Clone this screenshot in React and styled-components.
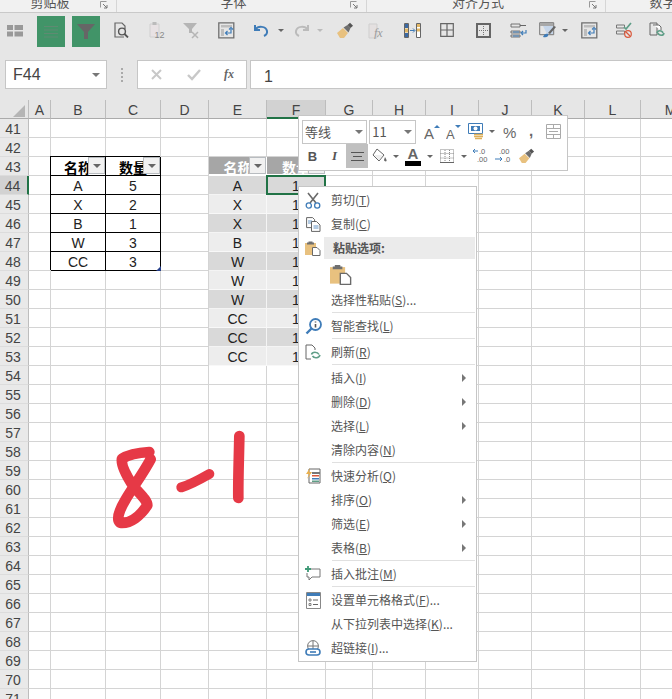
import React from 'react';
import styled, { createGlobalStyle, css } from 'styled-components';

const Global = createGlobalStyle`
  html, body { margin: 0; padding: 0; height: 699px; overflow: hidden; background: #fff; }
  body { font-family: "Noto Sans CJK SC", "Liberation Sans", sans-serif; }
`;
const Page = styled.div`position: relative; width: 672px; height: 699px; overflow: hidden;`;

/* ribbon */
const GroupBar = styled.div`display: flex; height: 12px; background: #f1f1f1; border-bottom: 1px solid #c9c9c9; overflow: hidden;`;
const Group = styled.div`
  position: relative; flex: 0 0 ${p => p.$w}px; height: 12px; box-sizing: border-box; padding-right: 16px;
  border-right: 1px solid #d6d6d6; text-align: center; font-size: 13px; line-height: 12px; color: #555; overflow: hidden;
  & > span { display: block; margin-top: -4px; }
`;
const Launcher = styled.svg`position: absolute; right: 8px; top: 1px;`;
const Toolbar = styled.div`display: flex; align-items: flex-start; height: 47px; padding-top: 3px; box-sizing: border-box; background: #e6e6e6;`;
const Slot = styled.div`
  flex: 0 0 ${p => p.$w}px; height: 31px; display: flex; align-items: center; justify-content: center; box-sizing: border-box;
  ${p => p.$green ? css`background: #419468;` : css`padding-bottom: 3px;`}
  ${p => p.$gap && css`margin-left: ${p.$gap}px;`}
`;

const Formula = styled.div`display: flex; align-items: flex-start; height: 40px; background: #e6e6e6; box-sizing: border-box;`;
const NameBox = styled.div`
  margin-left: 5px; width: 102px; height: 29px; box-sizing: border-box; background: #fff; border: 1px solid #c6c6c6;
  display: flex; align-items: center; justify-content: space-between; padding: 0 6px 0 7px;
  font: 16px "Liberation Sans", sans-serif; color: #444;
`;
const Caret = styled.i`display: block; width: 0; height: 0; border: ${p => p.$s || 4}px solid transparent; border-top-color: ${p => p.$c || '#777'}; border-bottom: 0;`;
const Dots = styled.div`width: 30px; height: 29px; display: flex; align-items: center; justify-content: center; flex-direction: column; gap: 2px;
  & > b { width: 2px; height: 2px; background: #aaa; }`;
const FxBox = styled.div`
  width: 110px; height: 29px; box-sizing: border-box; background: #fff; border: 1px solid #c6c6c6; display: flex; align-items: center;
  justify-content: space-between; padding: 0 12px 0 12px;
`;
const FxText = styled.span`font: italic bold 12px "Liberation Serif", serif; color: #666;`;
const FormulaInput = styled.div`
  flex: 1; margin-left: 3px; height: 29px; box-sizing: border-box; background: #fff; border: 1px solid #c6c6c6; border-right: 0;
  padding: 2px 0 0 13px; font: 16px/27px "Liberation Sans", sans-serif; color: #444;
`;

/* sheet */
const Sheet = styled.div`
  display: grid; grid-template-columns: 29px 22px 55px 55px 48px 58px 59px 47px 53px 53px 53px 53px 56px 60px; grid-auto-rows: 19px;
`;
const ColHead = styled.div`
  box-sizing: border-box; display: flex; align-items: center; justify-content: center; position: relative; padding-top: 1px;
  background: ${p => p.$on ? '#d2d2d2' : '#e6e6e6'}; color: #444; font: 14px "Liberation Sans", sans-serif;
  border-right: 1px solid #bdbdbd; border-bottom: 1px solid ${p => p.$on ? '#217346' : '#ababab'};
  ${p => p.$on && css`box-shadow: inset 0 -1px 0 #217346;`}
`;
const Corner = styled.div`
  box-sizing: border-box; background: #e6e6e6; border-right: 1px solid #bdbdbd; border-bottom: 1px solid #ababab; position: relative;
  &::after { content: ''; position: absolute; right: 3px; bottom: 1px; border-style: solid; border-width: 0 0 12px 12px; border-color: transparent transparent #b5b5b5 transparent; }
`;
const RowHead = styled.div`
  box-sizing: border-box; display: flex; align-items: center; justify-content: center; padding: 2px 2px 0 0;
  background: ${p => p.$on ? '#d2d2d2' : '#e9e9e9'}; color: #444; font: 14px "Liberation Sans", sans-serif;
  border-right: ${p => p.$on ? '2px solid #217346' : '1px solid #bdbdbd'}; border-bottom: 1px solid #dcdcdc;
`;
const kinds = {
  plain: css``,
  box: css`border-color: #000; box-shadow: -1px -1px 0 #000; z-index: 1; color: #222;`,
  boxHead: css`border-color: #000; box-shadow: -1px -1px 0 #000; z-index: 1; color: #000; font-weight: 700; font-family: "Noto Sans CJK SC", sans-serif;`,
  head: css`background: #a6a6a6; border-color: #fff; color: #fff; font-weight: 700; font-family: "Noto Sans CJK SC", sans-serif; border-bottom-width: 2px;`,
  dark: css`background: #d9d9d9; border-color: #f4f4f4; color: #222;`,
  light: css`background: #ededed; border-color: #f8f8f8; color: #222;`,
};
const Cell = styled.div`
  box-sizing: border-box; position: relative; display: flex; align-items: center; justify-content: center; white-space: nowrap; padding-top: 2px;
  border-right: 1px solid #d4d4d4; border-bottom: 1px solid #d4d4d4; font: 14px "Liberation Sans", sans-serif;
  ${p => kinds[p.$kind || 'plain']}
  ${p => p.$sel && css`&::after { content: ''; position: absolute; inset: -1px -1px -1px -1px; border: 2px solid #217346; z-index: 2; }`}
`;
const FilterBtn = styled.span`
  position: absolute; right: 0; top: 0; width: 17px; height: 17px; box-sizing: border-box; background: #f1f1f1; border: 1px solid #b8bcc0;
  display: flex; align-items: center; justify-content: center;
`;
const Handle = styled.span`position: absolute; right: -1px; bottom: -1px; width: 0; height: 0; border-style: solid; border-width: 0 0 5px 5px; border-color: transparent transparent #27408b transparent;`;

/* mini toolbar */
const Mini = styled.div`
  position: absolute; left: 298px; top: 115px; width: 270px; height: 56px; box-sizing: border-box; background: #fff; border: 1px solid #c6c6c6;
  padding: 3px 0 0 3px; z-index: 5; display: flex; flex-direction: column;
`;
const MiniRow = styled.div`display: flex; align-items: center; height: ${p => p.$h}px;`;
const Combo = styled.div`
  width: ${p => p.$w}px; margin-right: 2px; height: 24px; box-sizing: border-box; border: 1px solid #c6c6c6; display: flex; align-items: center; justify-content: space-between;
  padding: 0 3px 0 2px; font-size: 13px; color: #555;
`;
const MiniBtn = styled.div`
  flex: 0 0 ${p => p.$w}px; height: 24px; display: flex; align-items: center; justify-content: center; margin-left: ${p => p.$ml || 0}px;
  ${p => p.$on && css`background: #c0c0c0;`}
`;
const BoldMark = styled.span`font: ${p => p.$i ? 'italic' : 'normal'} bold 13px "Liberation ${p => p.$i ? 'Serif' : 'Sans'}", sans-serif; color: #555;`;

/* context menu */
const Menu = styled.div`
  position: absolute; left: 298px; top: 186px; width: 179px; height: 476px; box-sizing: border-box; background: #fff; border: 1px solid #c6c6c6;
  padding: 1px 0 0 0; z-index: 4; display: flex; flex-direction: column;
`;
const Item = styled.div`
  display: flex; align-items: center; height: 24px; flex: none; position: relative; font-size: 12px; color: #555; white-space: nowrap;
  & u { text-decoration: underline; text-underline-offset: 1px; }
`;
const IconCol = styled.div`flex: 0 0 32px; height: 24px; display: flex; align-items: center; justify-content: center; padding-right: 4px; box-sizing: border-box;`;
const Label = styled.div`flex: 1; height: 100%; display: flex; align-items: center; line-height: 1;
  ${p => p.$head && css`margin-right: 1px; margin-left: -7px; padding-left: 9px; background: #ebebeb; font-weight: 700; height: 22px;`}`;
const Arrow = styled.i`position: absolute; right: 10px; top: 8px; width: 0; height: 0; border: 4px solid transparent; border-left: 4px solid #777; border-right: 0;`;
const Sep = styled.div`flex: none; height: 1px; margin: 0 1px 1px 33px; background: #e0e0e0;`;
const PasteRow = styled.div`display: flex; align-items: center; flex: none; height: 28px; padding-left: 31px;`;
const Ink = styled.svg`position: absolute; left: 90px; top: 420px; z-index: 3;`;

/* icons */
const S = ({ w = 22, h = 22, children, vb }) => <svg width={w} height={h} viewBox={vb || `0 0 ${w} ${h}`} fill="none">{children}</svg>;
const B = '#3f7cb8', T = '#e8c17f';

const Launch = () => (
  <Launcher width="8" height="8" viewBox="0 0 8 8" fill="none"><path d="M.5.5h6M.5.5v6" stroke="#999" /><path d="M3 3l4 4M7 4v3H4" stroke="#777" /></Launcher>
);
const FreezeIcon = () => <S w={16} h={13}><path d="M0 1h6v5H0zM0 7.5h6v5H0zM7.5 1H16v5H7.5zM7.5 7.5H16v5H7.5z" fill="#999" /></S>;
const LinesIcon = () => <S w={16} h={13}><path d="M1 1.5h14M1 5h14M1 8.5h14M1 12h14" stroke="#5f8a72" strokeWidth="1.2" /></S>;
const FunnelIcon = ({ c = '#666' }) => <S w={18} h={17}><path d="M0 1h18l-7 8v7H7V9z" fill={c} /></S>;
const PreviewIcon = () => <S w={15} h={16}><path d="M10 15H1V1h7l3 3v3" stroke="#666" strokeWidth="1.2" /><circle cx="8" cy="9.5" r="3.4" stroke="#555" strokeWidth="1.4" /><path d="M10.5 12l3.5 3.5" stroke="#555" strokeWidth="1.8" /></S>;
const Paste12 = () => (
  <S w={18} h={18}><path d="M2 3h9v13H2z" fill="#e8e2e4" stroke="#d0d0d0" /><path d="M4.5 1h4v3h-4z" fill="#bbb" /><text x="6.5" y="17" fontSize="9" fontFamily="Liberation Sans" fill="#8a8a8a">12</text></S>
);
const FilterX = () => <S w={18} h={17}><path d="M1 1h14L10 7v4H7V7z" fill="#b5b5b5" /><path d="M10 10l6 6M16 10l-6 6" stroke="#b5b5b5" strokeWidth="1.5" /></S>;
const BoxArrow = () => <S w={17} h={17}><path d="M.8.8h15v15H.8z" stroke="#6f6f6f" strokeWidth="1.3" /><path d="M3 3h11v2.5H3zM3 7h3v7H3z" fill="#bdbdbd" /><path d="M13 7v4H8M9.5 9L7.5 11l2 2M11 7.5l2-2 2 2" stroke={B} strokeWidth="1.2" /></S>;
const Undo = ({ c = B }) => <S w={16} h={14}><path d="M2 2v5h5" stroke={c} strokeWidth="2" /><path d="M2.5 6.5C5 2.5 13 3 14 8c.4 2-1 4-3 5" stroke={c} strokeWidth="2" /></S>;
const Redo = () => <S w={16} h={14}><path d="M14 2v5H9" stroke="#bbb" strokeWidth="2" /><path d="M13.5 6.5C11 2.5 3 3 2 8c-.4 2 1 4 3 5" stroke="#bbb" strokeWidth="2" /></S>;
const Brush = ({ s = 17 }) => <S w={s} h={s} vb="0 0 17 17"><path d="M0 11l6-5 5 5-4 5H3z" fill={T} /><path d="M6.5 5.5l4-2.5 3 3-2 4.5z" fill="#6f6f6f" /><path d="M10.5 3L13 .8l3 3-2.5 2.2z" fill="#555" /></S>;
const FxDoc = () => <S w={17} h={17}><path d="M1 2h8v14H1z" fill="#e4e0e0" stroke="#cfcfcf" /><text x="6" y="15" fontSize="12" fontStyle="italic" fontFamily="Liberation Serif" fill="#9a9a9a">fx</text></S>;
const TransposeCols = () => <S w={17} h={15}><path d="M.5.5h4v14h-4zM12.5.5h4v14h-4z" fill="#fff" stroke="#666" /><path d="M1 1h3v4H1zM1 10h3v4H1z" fill="#3d6aa3" /><path d="M1 5.5h3v4H1zM13 1h3v3h-3zM13 5.5h3v3h-3z" fill="#e2b765" /><path d="M6 7.5h4.5M9 5.5l2 2-2 2" stroke={B} /></S>;
const GridIcon = () => <S w={14} h={14}><path d="M.7.7h12.6v12.6H.7zM7 1v12M1 7h12" stroke="#666" strokeWidth="1.2" /></S>;
const BorderIcon = () => <S w={15} h={15}><path d="M1 1h13v13H1z" stroke="#666" strokeWidth="2" /><path d="M7.5 3v9M3 7.5h9" stroke="#777" strokeDasharray="1 1" /></S>;
const WrapIcon = () => <S w={17} h={15}><path d="M1 1h9v3H1zM1 8h9v2H1zM1 12h9v2H1z" stroke="#666" strokeWidth=".9" /><path d="M10 2.5h6" stroke="#666" /><path d="M3 9h6M3 13h6" stroke={B} /><path d="M16 7v3h-4M13 8l-2 2 2 2" stroke={B} strokeWidth="1.2" /></S>;
const StyleIcon = () => <S w={17} h={17}><path d="M.7.7h14v12H.7z" stroke="#777" /><path d="M1 1h13v3H1z" fill="#a8a8a8" /><path d="M4 4h10v8H8z" fill="#c6d6ea" /><path d="M4 15c1-3 3-4 5-3 1 2-1 4-5 3z" fill={B} /><path d="M9 11l6-7 2 1-6 7z" fill="#666" /></S>;
const RulesIcon = () => <S w={16} h={16}><path d="M.5 3h8v3h-8zM.5 9h8v3h-8z" stroke="#777" /><path d="M8 5l2 2 5-6" stroke="#5e9e87" strokeWidth="1.7" /><circle cx="12" cy="12" r="3.3" stroke="#d9583b" strokeWidth="1.2" /><path d="M10 10l4 4" stroke="#d9583b" strokeWidth="1.2" /></S>;
const CopyRefresh = () => <S w={17} h={16}><path d="M1 1h7v12H1z" stroke="#666" /><path d="M4 3h6l2 2v3" stroke="#666" fill="#fff" /><path d="M8 11c.5-3 5-3 6 0M15 11c-.5 3-5 3-6 0" stroke="#5f9e87" strokeWidth="1.6" /></S>;

const Scissors = () => <S w={16} h={17}><path d="M3 1l8 10M13 1L5 11" stroke="#6a6a6a" strokeWidth="1.6" /><circle cx="3.8" cy="13.5" r="2.6" stroke={B} strokeWidth="1.3" /><circle cx="12.2" cy="13.5" r="2.6" stroke={B} strokeWidth="1.3" /></S>;
const CopyDocs = () => <S w={15} h={15}><path d="M.6.6h6l2 2v8H.6z" stroke="#666" fill="#fff" /><path d="M5.5 4.5h5l3.5 3.5v6.4H5.5z" stroke="#666" fill="#fff" /><path d="M2 4h4M2 6h3M7.5 9h5M7.5 11h5" stroke={B} strokeWidth=".8" /></S>;
const Clip = ({ w = 16, h = 16 }) => (
  <S w={w} h={h} vb="0 0 16 16"><path d="M0 3h11v12H0z" fill={T} /><path d="M3.5 1.5h4v1h1.5v2H2v-2h1.5z" fill="#6f6f6f" /><path d="M7.5 7.5h4.5l3 3v5H7.5z" fill="#fff" stroke="#6a6a6a" /></S>
);
const InfoSearch = () => <S w={17} h={17}><circle cx="10.5" cy="6.5" r="5.5" stroke={B} strokeWidth="1.8" /><path d="M6.5 10.5L1.5 15.5" stroke={B} strokeWidth="2.4" /><path d="M10.5 3.5v1M10.5 6v3.5" stroke="#555" strokeWidth="1.6" /></S>;
const RefreshDoc = () => <S w={16} h={16}><path d="M6 15H1V1h6l3 3v2" stroke="#666" /><path d="M6.5 10.5c.8-3 6-3 7.5 0M15 11c-1 3.5-6 3.5-7.5 1" stroke="#5f9e87" strokeWidth="1.6" /></S>;
const QuickIcon = () => <S w={16} h={16}><path d="M4 1h11v14H4z" fill="#fff" stroke="#666" /><path d="M7 4h8v2H7z" fill="#777" /><path d="M7 7h7v1.5H7z" fill="#d9583b" /><path d="M7 10h7v1.5H7z" fill={B} /><path d="M7 12.5h7V14H7z" fill="#5f9e87" /><path d="M5 0L1 6h3l-2 5 5-7H4z" fill="#eab04c" /></S>;
const NoteIcon = () => <S w={16} h={16}><path d="M6 3h9v8H7l-3 3v-3H2V7" stroke="#777" /><path d="M3 0v6M0 3h6" stroke="#3f9a77" strokeWidth="1.8" /></S>;
const FormatIcon = () => <S w={15} h={17}><path d="M.5.5h14v16H.5z" fill="#fff" stroke="#888" /><path d="M1 1h13v3H1z" fill={B} /><path d="M3 7h2v2H3zM3 11.5h2v2H3z" stroke="#666" strokeWidth=".8" /><path d="M7 8h5M7 12.5h5" stroke="#666" /></S>;
const LinkIcon = () => <S w={16} h={16}><circle cx="8" cy="6" r="5.4" stroke="#777" /><path d="M3 6h10M8 1v10" stroke="#777" /><path d="M4 9h8a3 3 0 010 6H4a3 3 0 010-6z" fill="#fff" stroke={B} strokeWidth="1.6" /><path d="M5 12h6" stroke={B} strokeWidth="1.6" /></S>;

const GrowA = ({ up }) => <S w={16} h={16}><text x="0" y="15" fontSize={up ? 15 : 13} fontFamily="Liberation Sans" fill="#666">A</text><path d={up ? 'M10 4l3-3 3 3z' : 'M9 1h6l-3 3z'} fill={B} /></S>;
const Account = () => <S w={17} h={17}><path d="M.5.5h14v10H.5z" stroke={B} /><path d="M3 3h9v5H3z" fill={B} /><circle cx="7.5" cy="5.5" r="2" fill="#fff" /><path d="M6 11.5h9M6 13.5h9M7 15.5h7" stroke="#e0b15a" strokeWidth="1.4" /></S>;
const MergeIcon = () => <S w={15} h={15}><path d="M.5.5h14v14H.5z" stroke="#aaa" /><path d="M1 4.5h13M1 10.5h13M7.5 1v3M7.5 11v3M3 7.5h9" stroke="#aaa" /></S>;
const AlignIcon = () => <S w={13} h={13}><path d="M0 2.5h13M2 6.5h9M0 10.5h13" stroke="#555" /></S>;
const FillIcon = () => <S w={16} h={16}><path d="M5 1l7 6-5 6-6-6z" stroke="#666" fill="#fff" /><path d="M13 9c1 2 2 3 1.5 4s-2.5 0-2.5-1z" fill="#666" /><path d="M2 7h9l-4 5z" fill="#eee" /></S>;
const ColorA = () => <S w={16} h={20}><text x="2.5" y="13" fontSize="15" fontWeight="700" fontFamily="Liberation Sans" fill="#666">A</text><path d="M0 15h16v5H0z" fill="#000" /></S>;
const DottedBox = () => <S w={14} h={14}><path d="M.5.5h13v13H.5zM.5 4.5h13M.5 9h13M5 1v12M9.5 1v12" stroke="#888" strokeDasharray="1 1" /><path d="M0 13.5h14" stroke="#666" /></S>;
const DecUp = () => <S w={18} h={18}><text x="7" y="7" fontSize="7.5" fontFamily="Liberation Sans" fill="#666">.0</text><text x="5" y="15" fontSize="7.5" fontFamily="Liberation Sans" fill="#666">.00</text><path d="M6 4H1M3 2L1 4l2 2" stroke={B} /></S>;
const DecDown = () => <S w={18} h={18}><text x="5" y="7" fontSize="7.5" fontFamily="Liberation Sans" fill="#666">.00</text><text x="10" y="15" fontSize="7.5" fontFamily="Liberation Sans" fill="#666">.0</text><path d="M1 12h7M6 10l2 2-2 2" stroke={B} /></S>;

const cols = ['A', 'B', 'C', 'D', 'E', 'F', 'G', 'H', 'I', 'J', 'K', 'L', 'M'];
const rows = Array.from({ length: 31 }, (_, i) => 41 + i);
const cells = {};
const left = [['A', 5], ['X', 2], ['B', 1], ['W', 3], ['CC', 3]];
cells.B43 = { t: '名称', k: 'boxHead', f: 1 };
cells.C43 = { t: '数量', k: 'boxHead', f: 1 };
left.forEach(([a, b], i) => {
  cells[`B${44 + i}`] = { t: a, k: 'box' };
  cells[`C${44 + i}`] = { t: b, k: 'box', h: i === 4 };
});
cells.E43 = { t: '名称', k: 'head', f: 1 };
cells.F43 = { t: '数量', k: 'head', f: 1 };
['A', 'X', 'X', 'B', 'W', 'W', 'W', 'CC', 'CC', 'CC'].forEach((a, i) => {
  const k = i % 2 ? 'light' : 'dark';
  cells[`E${44 + i}`] = { t: a, k };
  cells[`F${44 + i}`] = { t: 1, k, sel: i === 0 };
});

const menu = [
  { i: <Scissors />, t: '剪切', m: 'T' },
  { i: <CopyDocs />, t: '复制', m: 'C' },
  { i: <Clip />, t: '粘贴选项:', head: 1 },
  { paste: 1 },
  { t: '选择性粘贴', m: 'S', e: '...' },
  { sep: 1 },
  { i: <InfoSearch />, t: '智能查找', m: 'L' },
  { sep: 1 },
  { i: <RefreshDoc />, t: '刷新', m: 'R' },
  { sep: 1 },
  { t: '插入', m: 'I', a: 1 },
  { t: '删除', m: 'D', a: 1 },
  { t: '选择', m: 'L', a: 1 },
  { t: '清除内容', m: 'N' },
  { sep: 1 },
  { i: <QuickIcon />, t: '快速分析', m: 'Q' },
  { t: '排序', m: 'O', a: 1 },
  { t: '筛选', m: 'E', a: 1 },
  { t: '表格', m: 'B', a: 1 },
  { sep: 1 },
  { i: <NoteIcon />, t: '插入批注', m: 'M' },
  { sep: 1 },
  { i: <FormatIcon />, t: '设置单元格格式', m: 'F', e: '...' },
  { t: '从下拉列表中选择', m: 'K', e: '...' },
  { i: <LinkIcon />, t: '超链接', m: 'I', e: '...' },
];

export default function App() {
  return (
    <Page>
      <Global />
      <GroupBar>
        <Group $w={117}><span>剪贴板</span><Launch /></Group>
        <Group $w={250}><span>字体</span><Launch /></Group>
        <Group $w={239}><span>对齐方式</span><Launch /></Group>
        <Group $w={130}><span>数字</span></Group>
      </GroupBar>
      <Toolbar>
        <Slot $w={22} $gap={4}><FreezeIcon /></Slot>
        <Slot $w={28} $gap={11} $green><LinesIcon /></Slot>
        <Slot $w={28} $gap={7} $green><FunnelIcon /></Slot>
        <Slot $w={42}><PreviewIcon /></Slot>
        <Slot $w={30}><Paste12 /></Slot>
        <Slot $w={38}><FilterX /></Slot>
        <Slot $w={32}><BoxArrow /></Slot>
        <Slot $w={30} $gap={4}><Undo /></Slot>
        <Slot $w={10}><Caret $s={3} $c="#666" /></Slot>
        <Slot $w={26} $gap={3}><Redo /></Slot>
        <Slot $w={10}><Caret $s={3} $c="#bbb" /></Slot>
        <Slot $w={24} $gap={8}><Brush /></Slot>
        <Slot $w={38}><FxDoc /></Slot>
        <Slot $w={34}><TransposeCols /></Slot>
        <Slot $w={36}><GridIcon /></Slot>
        <Slot $w={36}><BorderIcon /></Slot>
        <Slot $w={34}><WrapIcon /></Slot>
        <Slot $w={24}><StyleIcon /></Slot>
        <Slot $w={12}><Caret $s={3} $c="#666" /></Slot>
        <Slot $w={34} $gap={1}><BoxArrow /></Slot>
        <Slot $w={36}><RulesIcon /></Slot>
        <Slot $w={30}><CopyRefresh /></Slot>
      </Toolbar>
      <Formula>
        <NameBox>F44<Caret $c="#777" /></NameBox>
        <Dots><b /><b /><b /><b /></Dots>
        <FxBox>
          <S w={13} h={13}><path d="M2 2l9 9M11 2l-9 9" stroke="#c8c8c8" strokeWidth="2" /></S>
          <S w={14} h={13}><path d="M1 7l4 4 8-9" stroke="#c8c8c8" strokeWidth="2.4" /></S>
          <FxText>fx</FxText>
        </FxBox>
        <FormulaInput>1</FormulaInput>
      </Formula>
      <Sheet>
        <Corner />
        {cols.map(c => <ColHead key={c} $on={c === 'F'}>{c}</ColHead>)}
        {rows.map(r => (
          <React.Fragment key={r}>
            <RowHead $on={r === 44}>{r}</RowHead>
            {cols.map(c => {
              const d = cells[`${c}${r}`];
              return (
                <Cell key={c} $kind={d && d.k} $sel={d && d.sel}>
                  {d && d.t}
                  {d && d.f && <FilterBtn><Caret $c="#666" /></FilterBtn>}
                  {d && d.h && <Handle />}
                </Cell>
              );
            })}
          </React.Fragment>
        ))}
      </Sheet>

      <Ink width="180" height="120" viewBox="0 0 540 360" fill="none" stroke="#e63946" strokeLinecap="round" strokeLinejoin="round">
        <path d="M178 96C150 98 118 102 96 116C92 135 110 168 128 196C150 222 172 240 172 256C152 286 122 312 90 308C78 298 88 270 106 240C126 205 160 160 182 118" strokeWidth="32" />
        <path d="M274 202C300 195 330 178 358 162" strokeWidth="30" />
        <path d="M448 48C447 110 444 180 445 234" strokeWidth="32" />
      </Ink>

      <Mini>
        <MiniRow $h={25}>
          <Combo $w={67}>等线<Caret $c="#777" /></Combo>
          <Combo $w={48}>11<Caret $c="#777" /></Combo>
          <MiniBtn $w={22} $ml={3}><GrowA up /></MiniBtn>
          <MiniBtn $w={22}><GrowA /></MiniBtn>
          <MiniBtn $w={22}><Account /></MiniBtn>
          <MiniBtn $w={10}><Caret $s={3} $c="#666" /></MiniBtn>
          <MiniBtn $w={28}><S w={17} h={14}><text x="0" y="13" fontSize="15" fontFamily="Liberation Sans" fill="#666">%</text></S></MiniBtn>
          <MiniBtn $w={14}><S w={6} h={14}><text x="0" y="11" fontSize="15" fontWeight="700" fontFamily="Liberation Sans" fill="#666">,</text></S></MiniBtn>
          <MiniBtn $w={28}><MergeIcon /></MiniBtn>
        </MiniRow>
        <MiniRow $h={24}>
          <MiniBtn $w={21}><BoldMark>B</BoldMark></MiniBtn>
          <MiniBtn $w={23}><BoldMark $i>I</BoldMark></MiniBtn>
          <MiniBtn $w={22} $on><AlignIcon /></MiniBtn>
          <MiniBtn $w={23}><FillIcon /></MiniBtn>
          <MiniBtn $w={10}><Caret $s={3} $c="#666" /></MiniBtn>
          <MiniBtn $w={24}><ColorA /></MiniBtn>
          <MiniBtn $w={10}><Caret $s={3} $c="#666" /></MiniBtn>
          <MiniBtn $w={24}><DottedBox /></MiniBtn>
          <MiniBtn $w={10}><Caret $s={3} $c="#666" /></MiniBtn>
          <MiniBtn $w={22} $ml={1}><DecUp /></MiniBtn>
          <MiniBtn $w={22}><DecDown /></MiniBtn>
          <MiniBtn $w={24} $ml={1}><Brush s={16} /></MiniBtn>
        </MiniRow>
      </Mini>

      <Menu>
        {menu.map((m, i) => {
          if (m.sep) return <Sep key={i} />;
          if (m.paste) return <PasteRow key={i}><Clip w={22} h={22} /></PasteRow>;
          return (
            <Item key={i}>
              <IconCol>{m.i}</IconCol>
              <Label $head={m.head}>
                {m.t}{m.m && <>(<u>{m.m}</u>)</>}{m.e}
              </Label>
              {m.a && <Arrow />}
            </Item>
          );
        })}
      </Menu>
    </Page>
  );
}
